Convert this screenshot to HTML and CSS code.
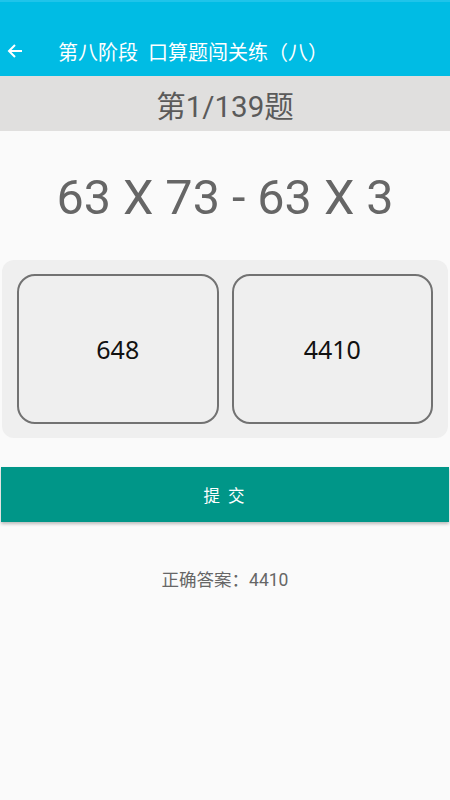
FILE: index.html
```html
<!DOCTYPE html>
<html lang="zh">
<head>
<meta charset="utf-8">
<link rel="stylesheet" href="styles.css">
</head>
<body>
<header class="appbar">
  <svg class="back" width="16" height="16" viewBox="0 0 16 16"><path d="M15 8H2M8 2L2 8l6 6" fill="none" stroke="#fff" stroke-width="2"/></svg>
  <h1 class="title">第八阶段&nbsp;&nbsp;口算题闯关练（八）</h1>
</header>
<div class="progress">第1/139题</div>
<div class="question">63 X 73 - 63 X 3</div>
<div class="options">
  <div class="option">648</div>
  <div class="option">4410</div>
</div>
<button class="submit">提&nbsp;交</button>
<div class="answer">正确答案：4410</div>
</body>
</html>
```
FILE: styles.css
```css
html, body {
  margin: 0;
  padding: 0;
  background: #fafafa;
  font-family: Roboto, "Noto Sans CJK SC", sans-serif;
  width: 450px;
  height: 800px;
  overflow: hidden;
}
.appbar {
  height: 76px;
  background: #00bce4;
  border-top: 2px solid #1fc4ea;
  display: flex;
  align-items: center;
  padding: 24px 0 0 7px;
  box-sizing: border-box;
}
.title {
  margin: 0 0 0 35px;
  font-size: 20px;
  font-weight: normal;
  color: #fff;
}
.progress {
  height: 55px;
  background: #e0dfde;
  display: flex;
  align-items: center;
  justify-content: center;
  font-size: 29.5px;
  color: #5a5a5a;
}
.question {
  height: 129px;
  display: flex;
  align-items: center;
  justify-content: center;
  font-size: 48.5px;
  color: #666;
  padding-top: 4px;
  box-sizing: border-box;
}
.options {
  margin: 0 2px;
  height: 178px;
  background: #efefef;
  border-radius: 12px;
  display: grid;
  grid-template-columns: 1fr 1fr;
  gap: 13px;
  padding: 14px 15px;
  box-sizing: border-box;
}
.option {
  border: 2px solid #727272;
  border-radius: 18px;
  display: flex;
  align-items: center;
  justify-content: center;
  font-size: 25px;
  color: #111;
  font-family: "Noto Sans", "Noto Sans CJK SC", sans-serif;
}
.submit {
  display: block;
  width: 448px;
  margin: 29px 1px 0;
  height: 55px;
  border: none;
  background: #009688;
  color: #fff;
  font-size: 16.5px;
  font-family: Roboto, "Noto Sans CJK SC", sans-serif;
  letter-spacing: 2px;
  box-shadow: 0 2px 3px rgba(0,0,0,0.25);
}
.answer {
  margin-top: 44px;
  text-align: center;
  font-size: 17.5px;
  color: #666;
}
```
